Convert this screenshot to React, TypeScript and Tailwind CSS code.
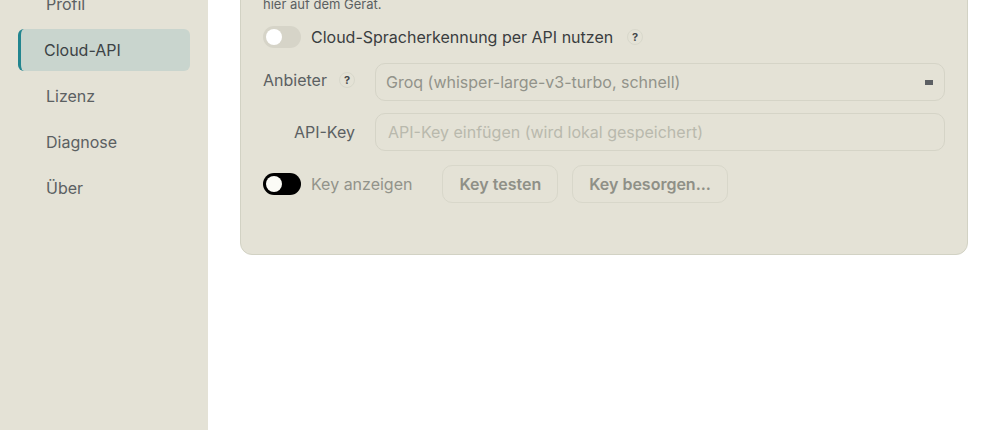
import { useState } from 'react';

const pages = ['Profil', 'Cloud-API', 'Lizenz', 'Diagnose', 'Über'];

function Help({ text }: { text: string }) {
  return (
    <button
      type="button"
      aria-label={text}
      className="flex size-4 shrink-0 items-center justify-center rounded-full border border-[#d8d8cb] text-[11px] leading-none font-bold text-[#45494b]"
    >
      ?
    </button>
  );
}

export default function App() {
  const [page, setPage] = useState('Cloud-API');
  const [enabled, setEnabled] = useState(false);

  return (
    <div className="flex h-screen overflow-hidden bg-white font-['Inter',sans-serif] text-base text-[#5b6062]">
      <aside className="w-52 shrink-0 bg-[#e4e2d6] px-[18px]">
        <nav className="-mt-[17px] flex flex-col gap-1">
          {pages.map((p) => (
            <button
              key={p}
              type="button"
              onClick={() => setPage(p)}
              className={
                p === page
                  ? 'h-[42px] rounded-md border-l-3 border-[#22858f] bg-[#c9d5ce] pl-[23px] text-left text-[#3c4245]'
                  : 'h-[42px] rounded-md pl-7 text-left'
              }
            >
              {p}
            </button>
          ))}
        </nav>
      </aside>

      <main className="min-w-0 flex-1 px-8">
        <section className="-mt-4 rounded-b-xl border border-[#d2d2c4] bg-[#e4e2d6] px-[22px] pt-[9px] pb-[51px]">
          <p className="text-[13px] leading-5">hier auf dem Gerät.</p>

          <div className="mt-[11px] flex h-6 items-center">
            <input
              id="cloud"
              type="checkbox"
              role="switch"
              checked={enabled}
              onChange={(e) => setEnabled(e.target.checked)}
              className="h-[22px] w-[38px] shrink-0 appearance-none rounded-full bg-[#d6d4c8] p-[3px] before:block before:size-4 before:rounded-full before:bg-white checked:bg-[#22858f] checked:before:ml-4"
            />
            <label htmlFor="cloud" className="mr-[14px] ml-[10px] text-[#3a3d3f]">
              Cloud-Spracherkennung per API nutzen
            </label>
            <Help text="Hilfe zur Cloud-Spracherkennung" />
          </div>

          <div className="mt-[14px] grid grid-cols-[92px_1fr] items-center gap-x-5 gap-y-3">
            <div className="flex items-center justify-between pb-1">
              <label htmlFor="provider">Anbieter</label>
              <Help text="Hilfe zum Anbieter" />
            </div>
            <div className="relative">
              <select
                id="provider"
                disabled={!enabled}
                className="h-[38px] w-full appearance-none rounded-[10px] border border-[#d5d4c7] bg-transparent px-[10px] text-[#92938a] opacity-100"
              >
                <option>Groq (whisper-large-v3-turbo, schnell)</option>
              </select>
              <span className="pointer-events-none absolute top-[17px] right-3 h-[5px] w-2 bg-[#5c5f63]" />
            </div>
            <label htmlFor="key" className="text-right">
              API-Key
            </label>
            <input
              id="key"
              type="password"
              disabled={!enabled}
              placeholder="API-Key einfügen (wird lokal gespeichert)"
              className="h-[38px] w-full min-w-0 rounded-[10px] border border-[#d5d4c7] bg-transparent px-3 placeholder:text-[#b9b9ad]"
            />
          </div>

          <div className="mt-[14px] flex items-center">
            <input
              id="show"
              type="checkbox"
              role="switch"
              disabled={!enabled}
              className="h-[22px] w-[38px] shrink-0 appearance-none rounded-full bg-black p-[3px] before:block before:size-4 before:rounded-full before:bg-[#fbfbf6] checked:before:ml-4"
            />
            <label htmlFor="show" className="mr-[30px] ml-[10px] text-[#92938a]">
              Key anzeigen
            </label>
            <div className="flex gap-[14px] font-semibold text-[#8f9087]">
              <button
                type="button"
                disabled={!enabled}
                className="h-[38px] rounded-[10px] border border-[#d8d7ca] px-4"
              >
                Key testen
              </button>
              <button
                type="button"
                disabled={!enabled}
                className="h-[38px] rounded-[10px] border border-[#d8d7ca] px-4"
              >
                Key besorgen...
              </button>
            </div>
          </div>
        </section>
      </main>
    </div>
  );
}
